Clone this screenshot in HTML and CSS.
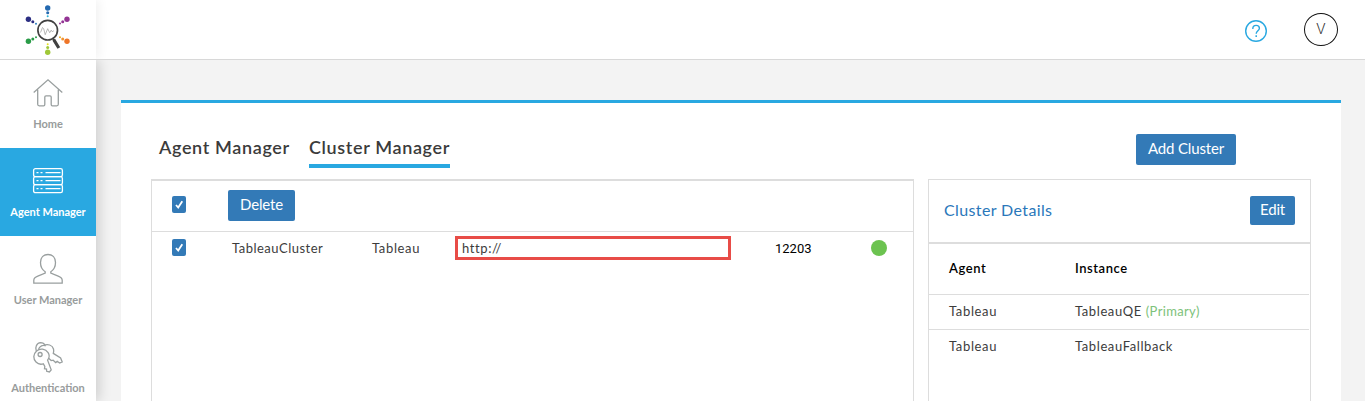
FILE: index.html
```html
<!DOCTYPE html>
<html lang="en">
<head>
<meta charset="utf-8">
<title>Cluster Manager</title>
<link rel="stylesheet" href="styles.css">
</head>
<body>
<header class="topbar">
  <div class="brand">
    <svg width="48" height="52" viewBox="0 0 48 52">
      <g fill="#2469b0"><circle cx="23.7" cy="4" r="2.7"/><circle cx="23.7" cy="8.8" r="1.5"/><circle cx="23.7" cy="12.3" r="1" fill="#29b1d5"/></g>
      <g fill="#2c2f83"><circle cx="4.4" cy="15.3" r="2.7"/><circle cx="8.8" cy="17.7" r="1.5"/><circle cx="12" cy="19.7" r="1" fill="#2e80bd"/></g>
      <g fill="#933494"><circle cx="43" cy="15.3" r="2.7"/><circle cx="38.7" cy="17.7" r="1.5"/><circle cx="36" cy="19.6" r="1"/></g>
      <g fill="#2a9c48"><circle cx="4.4" cy="37.3" r="2.7"/><circle cx="8.8" cy="35" r="1.5"/><circle cx="12" cy="33.3" r="1"/></g>
      <g fill="#ee7528"><circle cx="43" cy="37.3" r="2.7"/><circle cx="38.7" cy="35" r="1.5" fill="#f3942e"/><circle cx="36" cy="33.3" r="1" fill="#eba81f"/></g>
      <g fill="#a0c838"><circle cx="23.7" cy="48.3" r="2.7"/><circle cx="23.7" cy="43.4" r="1.5"/><circle cx="23.7" cy="40.2" r="1" fill="#e6df1c"/></g>
      <circle cx="23.7" cy="26.2" r="9.8" fill="#fff" stroke="#414141" stroke-width="1.7"/>
      <path d="M29 34.5l1.6 2.6" stroke="#414141" stroke-width="1.8"/>
      <path d="M30.6 37l3.4 5.6" stroke="#414141" stroke-width="3.2" stroke-linecap="square"/>
      <path d="M16.5 28.5l2-5 1.2 1.2 1.5 6 2.5-6 2 4 1.500-2.500 1 1.500 1.700-1" fill="none" stroke="#999" stroke-width=".7"/>
    </svg>
  </div>
  <div class="tools">
    <svg class="help" width="24" height="24" viewBox="0 0 24 24" fill="none" stroke="#29a8e1">
      <circle cx="12" cy="12" r="10.3" stroke-width="1.4"/>
      <path d="M8.800 9.900c0-2.200 1.300-3.500 3.300-3.500 1.900 0 3.300 1.100 3.300 2.800 0 2.600-3.200 2.600-3.200 5.600" stroke-width="1.400"/>
      <path d="M12.200 16.200v1.700" stroke-width="1.500"/>
    </svg>
    <div class="avatar">V</div>
  </div>
</header>
<div class="body">
  <nav class="sidebar">
    <a class="item">
      <svg width="32" height="32" viewBox="0 0 32 32"><path d="M1.700 15.500L16 2.800l14.300 12.700M5.700 12.800v14.500q0 1.500 1.500 1.500h4.400q1.200 0 1.200-1.200V20q0-1.200 1.200-1.200h4q1.200 0 1.200 1.200v7.600q0 1.200 1.200 1.200h4.400q1.500 0 1.500-1.500V12.800"/></svg>
      <span>Home</span>
    </a>
    <a class="item active">
      <svg width="32" height="32" viewBox="0 0 32 32"><rect x="1.600" y="3.600" width="28.800" height="8.100" rx="1.800"/><rect x="1.600" y="11.700" width="28.800" height="8" rx="1.800"/><rect x="1.600" y="19.700" width="28.800" height="8" rx="1.800"/><path stroke-width="1.200" d="M4.500 7.600h2m2 0h2m3 0h15M4.500 15.700h2m2 0h2m3 0h15M4.500 23.700h2m2 0h2m3 0h15"/></svg>
      <span>Agent Manager</span>
    </a>
    <a class="item">
      <svg width="32" height="32" viewBox="0 0 32 32"><path d="M13.200 18.800v1.200L5.800 23.200q-4 1.700-4 4v3h28.400v-3q0-2.300-4-4L18.800 20v-1.200c3-2 4.700-6 4.700-9.300 0-4.800-2.900-8-7.500-8s-7.500 3.200-7.500 8c0 3.300 1.700 7.300 4.700 9.300z"/></svg>
      <span>User Manager</span>
    </a>
    <a class="item">
      <svg width="32" height="32" viewBox="0 0 32 32"><path d="M15.600 19.200c1.600-2 2-5.200.5-7.500C13.500 7.700 8 7 4.600 10 1 13.200 1 18 4 21c2 2 4.800 2.700 7.300 1.800l1.500 2.700-.3 2.200 2 .4.200 2.200 2.700.7 1.800-2.200z"/><circle cx="8.100" cy="13.500" r="2"/><path d="M4.300 10.100C2.800 6.500 4.500 2 8.500 1.700c2.200 0 3.800 1 4.500 2.800-3.500-.5-5.500 1.300-6.500 4M11.500 4.500c4-2 9-.5 10 3.500.5 2 .4 3-.2 4.400l7.300 4.500 1.600 4-2.500 1.100-2.500-1.600-1.500 1.200-2.500-2.400-2 .4-2.600-2.300"/></svg>
      <span>Authentication</span>
    </a>
  </nav>
  <main class="panel">
    <div class="heading">
      <div class="tabs"><a class="tab tab-agent">Agent Manager</a><a class="tab current">Cluster Manager</a></div>
      <button class="btn add">Add Cluster</button>
    </div>
    <div class="columns">
      <section class="clusters">
        <div class="toolbar">
          <span class="check"><svg width="14" height="17" viewBox="0 0 14 17"><path d="M4 9l2.200 2.500L10.300 5.200"/></svg></span>
          <button class="btn delete">Delete</button>
        </div>
        <div class="row">
          <span class="check"><svg width="14" height="17" viewBox="0 0 14 17"><path d="M4 9l2.200 2.500L10.300 5.200"/></svg></span>
          <span class="name">TableauCluster</span>
          <span class="type">Tableau</span>
          <span class="url">http://</span>
          <span class="port">12203</span>
          <span class="status"></span>
        </div>
      </section>
      <section class="details">
        <div class="details-head"><span class="title">Cluster Details</span><button class="btn edit">Edit</button></div>
        <div class="grid grid-head"><span>Agent</span><span>Instance</span></div>
        <div class="grid"><span class="type">Tableau</span><span><span class="instance">TableauQE</span><span class="primary">(Primary)</span></span></div>
        <div class="grid last"><span class="type">Tableau</span><span class="instance">TableauFallback</span></div>
      </section>
    </div>
  </main>
</div>
</body>
</html>
```
FILE: styles.css
```css
* { box-sizing: border-box; }
body { margin: 0; height: 401px; overflow: hidden; display: flex; flex-direction: column; background: #f3f3f3; font-family: Lato, "Open Sans", sans-serif; font-size: 13px; color: #3c3c3c; white-space: nowrap; }
.topbar { flex: none; height: 60px; display: flex; justify-content: space-between; background: #fff; border-bottom: 1px solid #d8d8d8; }
.brand { width: 96px; padding: 4px 0 0 24px; box-shadow: 3px 0 10px rgba(0,0,0,.06); clip-path: inset(0 -20px 0 0); }
.brand svg, .item svg, .check svg, .help { display: block; }
.tools { display: flex; gap: 36px; padding: 13px 27px 0 0; }
.help { margin-top: 6px; }
.avatar { width: 34px; height: 33px; border: 1.4px solid #111; border-radius: 50%; text-align: center; font: 300 15px/30px Roboto, sans-serif; color: #333; }
.body { flex: 1; display: flex; min-height: 0; }
.sidebar { flex: none; width: 96px; overflow: hidden; background: #fff; }
.body .sidebar { overflow: clip; box-shadow: 3px 0 12px rgba(0,0,0,.16); clip-path: inset(0 -20px 0 0); }
.item { height: 88px; padding-top: 17px; display: flex; flex-direction: column; align-items: center; gap: 7px; color: #989c9c; font-size: 11px; font-weight: 700; line-height: 15px; }
.item:last-child { height: 77px; }
.item svg { fill: none; stroke: #999f9f; stroke-width: 1.3; }
.active { background: #29a8e1; color: #fff; }
.item.active svg { stroke: #fff; }
.panel { width: 1220px; margin: 40px 0 0 25px; background: #fff; border-top: 3px solid #29a8e1; padding: 31px 30px 0; display: flex; flex-direction: column; }
.heading { display: flex; justify-content: space-between; height: 45px; padding: 0 75px 0 8px; }
.tabs { display: flex; gap: 20px; font-size: 18px; font-weight: 600; line-height: 27px; letter-spacing: .64px; color: #3b3b3b; }
.tab { height: 34px; }
.tab-agent { width: 130px; }
.current { width: 141px; border-bottom: 4px solid #29a8e1; }
.btn { height: 31px; padding: 0; border: 0; border-radius: 2px; background: #337ab7; color: #fff; font: 15px/27px Lato, sans-serif; letter-spacing: -.15px; text-align: center; padding-bottom: 3px; }
.add { width: 100px; }
.columns { flex: 1; display: flex; gap: 14px; }
.clusters { width: 763px; border: 1px solid #ddd; border-top-width: 2px; border-bottom: 0; }
.toolbar { height: 51px; border-bottom: 1px solid #ddd; display: flex; align-items: flex-start; gap: 42px; padding: 9px 0 0 20px; }
.check { width: 14px; height: 17px; background: #337ab7; border-radius: 2px; }
.toolbar .check { margin-top: 6px; }
.check svg { fill: none; stroke: #fff; stroke-width: 1.8; }
.delete { width: 67px; }
.row { display: grid; grid-template-columns: 60px 140px 83px 320px 96px 16px; height: 31px; align-items: center; padding-left: 20px; }
.name { letter-spacing: .5px; }
.type { letter-spacing: .65px; }
.url { width: 276px; height: 24px; margin-top: 1px; border: 3px solid #e84c47; padding-left: 4px; line-height: 18px; letter-spacing: .6px; }
.port { font-family: Roboto, sans-serif; color: #000; padding-top: 1px; }
.status { width: 16px; height: 16px; margin-top: 1px; border-radius: 50%; background: #6cc350; }
.details { width: 383px; border: 1px solid #ddd; border-bottom: 0; }
.details-head { height: 64px; border-bottom: 2px solid #ddd; display: flex; justify-content: space-between; align-items: flex-start; padding: 16px 15px 0; }
.title { color: #2a77ba; font-size: 16px; line-height: 27px; letter-spacing: .38px; }
.edit { width: 45px; height: 29px; line-height: 26px; }
.grid { display: grid; grid-template-columns: 126px 1fr; height: 35px; padding-left: 20px; margin-right: 1px; border-bottom: 1px solid #ddd; line-height: 32px; }
.grid-head { height: 51px; line-height: 48px; font-weight: 600; letter-spacing: .55px; color: #000; }
.last { border: 0; }
.instance { letter-spacing: .6px; }
.primary { color: #7dc27a; margin-left: 4px; letter-spacing: .35px; }
```
